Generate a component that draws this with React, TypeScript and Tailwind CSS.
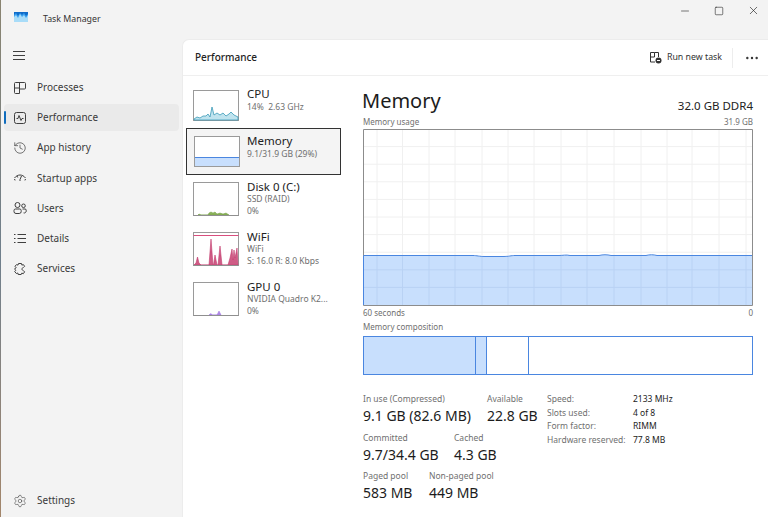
import React from "react";
import { History, Minus, Square, X, Settings, Ellipsis } from "lucide-react";

const navItems = [
  { label: "Processes", icon: "processes" },
  { label: "Performance", icon: "performance", active: true },
  { label: "App history", icon: "history" },
  { label: "Startup apps", icon: "startup" },
  { label: "Users", icon: "users" },
  { label: "Details", icon: "details" },
  { label: "Services", icon: "services" },
];

const NavIcon = ({ name }: { name: string }) => {
  const c = "#3f3f3f";
  if (name === "history") return <History size={14} strokeWidth={1.2} color={c} />;
  return (
    <svg width="14" height="14" viewBox="0 0 14 14" fill="none" stroke={c} strokeWidth="1">
      {name === "details" && <path d="M1 3.500H2.500M4.500 3.500H13M1 7.500H2.500M4.500 7.500H13M1 11.500H2.500M4.500 11.500H13" />}
      {name === "processes" && (
        <path d="M2.500 1.500h9a1 1 0 0 1 1 1V7a1 1 0 0 1-1 1H6.500v4.500h-4a1 1 0 0 1-1-1v-9a1 1 0 0 1 1-1ZM6.500 1.500V8M1.500 7h5" />
      )}
      {name === "performance" && (
        <>
          <rect x="1.500" y="1.500" width="11" height="11" rx="2" />
          <path d="M3.500 7.500h1.500l1-3 2 5 1-2h1.500" />
        </>
      )}
      {name === "startup" && (
        <path d="M1 8.500 2.500 9M13 8.500 11.500 9M1.500 7C3 5 5 4 7 4s4 1 5.500 3M7 8.500 8.500 5M7 8.500v1.500M4 5l.8 1.500" />
      )}
      {name === "users" && (
        <>
          <circle cx="4.500" cy="4" r="2.500" />
          <circle cx="10.500" cy="4.800" r="1.800" />
          <path d="M2.500 8h4.200a1.500 1.500 0 0 1 1.500 1.500v1a2 2 0 0 1-2 2H3a2 2 0 0 1-2-2v-1A1.500 1.500 0 0 1 2.500 8ZM9.500 8H12a1.200 1.200 0 0 1 1.200 1.200v.8a2 2 0 0 1-2.600 1.900" />
        </>
      )}
      {name === "services" && (
        <path d="M5.500 1.500h3l.4 1.600 1.500-.5 1.200 1.700-1.200 1.200c-1 .3-1.500 1-1.500 1.600s.7 1.300 1.500 1.500l1.200 1.300-1.300 1.800-1.500-.6-.6 1.400h-3l-.4-1.500-1.500.5-1.600-2 1.200-1.200L1.500 7l1.700-1.300L2 4.300l1.500-1.700 1.500.5Z" />
      )}
    </svg>
  );
};

const Thumb = ({ children }: { children?: React.ReactNode }) => (
  <svg width="46" height="34" viewBox="0 0 46 34" className="shrink-0">
    <rect x="0.500" y="0.500" width="45" height="33" fill="#fff" stroke="#9a9a9a" />
    {children}
    <path d="M0.500 33.500H45.500" stroke="#8f8f8f" />
  </svg>
);

const devices = [
  {
    name: "Disk 0 (C:)",
    sub: ["SSD (RAID)", "0%"],
    chart: <path d="M5 33 6 32 8 33H15L16 31 18 30 20 31 22 30 24 32 27 31 30 32 33 31 36 33Z" fill="#8bb35a" stroke="#6f9a3e" strokeWidth=".5" />,
  },
  {
    name: "WiFi",
    sub: ["WiFi", "S: 16.0 R: 8.0 Kbps"],
    chart: (
      <>
        <path d="M.500 3.500H45.500" stroke="#d94f7e" />
        <path d="M1 33 3 31 4.500 25 6 31 8 33H16L18 7 20 33H20.500L22 23 24 33H25L27 14 29 33H35L37 26 39 17 40 28 41 18 42 26 44 16 45 33Z" fill="#cf5c86" stroke="#c23a6d" strokeWidth=".6" />
      </>
    ),
  },
  {
    name: "GPU 0",
    sub: ["NVIDIA Quadro K2...", "0%"],
    chart: <path d="M16 33 18 31.500 19 33H24L26 29 28 33Z" fill="#b28be8" stroke="#9a6fe0" strokeWidth=".5" />,
  },
];

const gridX = [14, 39.5, 66, 92, 119, 145, 171, 198, 224, 251, 278, 304, 329, 356, 383];
const gridY = [17.6, 35.2, 52.8, 70.4, 88, 105.6, 123.2, 140.8, 158.4];
const memLine =
  "M0 126.500H110C114 126.500 116 127.500 122 127.500H140C146 127.500 148 126.500 152 126.500H196C200 126.500 203 125.500 207 126.500H236C240 125.500 244 125.500 248 126.500H283C287 125.500 290 125.500 294 126.500H389";

const MemoryGraph = () => (
  <svg width="390" height="177" viewBox="0 0 390 177" className="block">
    <rect x="0.500" y="0.500" width="389" height="176" fill="#fff" />
    <path d={`${memLine}V176H0Z`} fill="#c8dffd" />
    {gridX.map((x) => (
      <React.Fragment key={x}>
        <path d={`M${x} 1V126`} stroke="#f0f0f0" />
        <path d={`M${x} 127V176`} stroke="#b9d2f4" />
      </React.Fragment>
    ))}
    {gridY.map((y) => (
      <path key={y} d={`M1 ${y}H389`} stroke={y > 126 ? "#b9d2f4" : "#f0f0f0"} />
    ))}
    <path d={memLine} fill="none" stroke="#4a86e0" />
    <path d="M.500 126V176.500H389.500V.500H.500V126" fill="none" stroke="#8c8c8c" />
    <path d="M.500 126.500V176" stroke="#4a86e0" />
  </svg>
);

const Stat = ({ label, value, w }: { label: string; value: string; w?: string }) => (
  <div className={w}>
    <div className="text-[8.500px] leading-[12px] text-[#6f6f6f]">{label}</div>
    <div className="mt-[1px] text-[14px] leading-[19px] text-[#1c1c1c] whitespace-nowrap">{value}</div>
  </div>
);

const App: React.FC = () => {
  return (
    <div className="flex h-[517px] w-[768px] overflow-hidden bg-[#f3f3f3] text-[#1c1c1c] font-['Noto_Sans',sans-serif]">
      <div className="w-[1px] shrink-0 bg-gradient-to-b from-[#8a8470] via-[#6f7f8c] to-[#a3866a]" />
      <div className="flex min-w-0 flex-1 flex-col">
        {/* title bar */}
        <div className="flex h-[39px] shrink-0 items-center">
          <svg width="14" height="10" viewBox="0 0 14 10" className="ml-[13px] mb-[5px]">
            <rect width="14" height="10" fill="#3aa0ef" />
            <path d="M0 5 2 3 4 6 6 2 8 5 10 3 12 6 14 3V10H0Z" fill="#a8dcf8" />
            <path d="M0 0H14V2L12 4 10 1 8 3 6 1 4 4 2 1 0 3Z" fill="#0f6cc9" />
          </svg>
          <span className="ml-[15px] mt-[1px] text-[8.800px] text-[#333]">Task Manager</span>
          <div className="ml-auto mr-[-2px] flex items-center self-start pt-[4px] text-[#222]">
            <div className="flex w-[34px] justify-center"><Minus size={12} strokeWidth={1.2} /></div>
            <div className="flex w-[34px] justify-center"><Square size={10} strokeWidth={1.4} /></div>
            <div className="flex w-[34px] justify-center"><X size={13} strokeWidth={1.2} /></div>
          </div>
        </div>
        <div className="flex min-h-0 flex-1">
          {/* nav */}
          <div className="flex w-[181px] shrink-0 flex-col">
            <div className="ml-[12px] mt-[10px] h-[14px]">
              <svg width="13" height="14" viewBox="0 0 13 14" fill="none" stroke="#3f3f3f">
                <path d="M0 2.500H12M0 6.500H12M0 10.500H12" />
              </svg>
            </div>
            <div className="mt-[11px] flex flex-col gap-[3.200px] px-[3px]">
              {navItems.map((item) => (
                <div
                  key={item.label}
                  className={`relative flex h-[27px] items-center rounded-[4px] pl-[9px] ${item.active ? "bg-[#eaeaea]" : ""}`}
                >
                  {item.active && <div className="absolute left-0 top-[7px] h-[13px] w-[2px] rounded bg-[#0f6cbd]" />}
                  <NavIcon name={item.icon} />
                  <span className="ml-[10px] text-[10px] text-[#3a3a3a]">{item.label}</span>
                </div>
              ))}
            </div>
            <div className="mb-[9px] ml-[12px] mt-auto flex items-center">
              <Settings size={14} strokeWidth={1} color="#3f3f3f" />
              <span className="ml-[10px] text-[10px] text-[#3a3a3a]">Settings</span>
            </div>
          </div>
          {/* main panel */}
          <div className="flex min-w-0 flex-1 flex-col rounded-tl-[7px] border-l border-t border-[#ececec] bg-white">
            <div className="flex h-[36px] shrink-0 items-center border-b border-[#efefef] pl-[12px]">
              <span className="text-[10px] font-medium text-[#222]">Performance</span>
              <div className="ml-auto mr-[8px] flex items-center">
                <svg width="13" height="13" viewBox="0 0 13 13" fill="none" stroke="#333" strokeWidth="1">
                  <path d="M1.500 6V1.500H5.500V6ZM1.500 6V11H6M5.500 1.500H9.500V6" />
                  <circle cx="9.500" cy="9.500" r="3" fill="#333" stroke="none" />
                  <path d="M8 9.500H11" stroke="#fff" />
                </svg>
                <span className="ml-[5px] text-[8.800px] text-[#333]">Run new task</span>
                <div className="ml-[10px] h-[20px] w-px bg-[#ededed]" />
                <div className="ml-[11px] flex w-[16px] justify-center"><Ellipsis size={16} strokeWidth={1.6} color="#333" /></div>
              </div>
            </div>
            <div className="flex min-h-0 flex-1">
              {/* device list */}
              <div className="flex w-[180px] shrink-0 flex-col pl-[3px] pt-[14px]">
                <div className="flex items-start pl-[7px]">
                  <svg width="46" height="31" viewBox="0 0 46 31" className="shrink-0">
                    <rect x="0.500" y="0.500" width="45" height="30" fill="#fff" stroke="#9a9a9a" />
                    <path d="M1 29 4 27 7 28 10 26 13 26 15 24 17 27 19 17 21 25 24 23 27 25 30 23 33 26 36 24 38 22 41 25 45 27V30H1Z" fill="#bfe3ee" stroke="#3b9ab8" strokeWidth=".8" />
                  </svg>
                  <div className="ml-[8px] mt-[-2px]">
                    <div className="text-[11.500px] leading-[12px] text-[#222]">CPU</div>
                    <div className="text-[8.500px] leading-[14px] text-[#6f6f6f]">14%&nbsp; 2.63 GHz</div>
                  </div>
                </div>
                <div className="mt-[7px] flex h-[47px] w-[155px] items-start border border-[#333] bg-[#f4f4f4] pl-[7px] pt-[7px]">
                  <svg width="46" height="31" viewBox="0 0 46 31" className="shrink-0">
                    <rect x="0.500" y="0.500" width="45" height="30" fill="#fff" stroke="#9a9a9a" />
                    <rect x="1" y="21" width="44" height="9" fill="#c8dffd" />
                    <path d="M1 21.500H45" stroke="#4a86e0" />
                  </svg>
                  <div className="ml-[7px] mt-[-1px]">
                    <div className="text-[11.500px] leading-[12px] text-[#222]">Memory</div>
                    <div className="text-[8.500px] leading-[14px] text-[#6f6f6f]">9.1/31.9 GB (29%)</div>
                  </div>
                </div>
                <div className="mt-[7px] flex flex-col gap-[16px]">
                  {devices.map((d) => (
                    <div key={d.name} className="flex h-[34px] items-start pl-[7px]">
                      <Thumb>{d.chart}</Thumb>
                      <div className="ml-[8px] mt-[-1px]">
                        <div className="text-[11.500px] leading-[12px] text-[#222]">{d.name}</div>
                        {d.sub.map((s) => (
                          <div key={s} className="text-[8.500px] leading-[12px] text-[#6f6f6f]">{s}</div>
                        ))}
                      </div>
                    </div>
                  ))}
                </div>
              </div>
              {/* detail */}
              <div className="min-w-0 flex-1">
                <div className="flex h-[38px] w-[390px] items-end justify-between">
                  <span className="ml-[-1px] text-[20px] leading-[26px] text-[#1c1c1c]">Memory</span>
                  <span className="text-[11.500px] leading-[16px] text-[#222]">32.0 GB DDR4</span>
                </div>
                <div className="flex h-[15px] w-[390px] items-center justify-between text-[8px] text-[#6f6f6f]">
                  <span>Memory usage</span>
                  <span>31.9 GB</span>
                </div>
                <MemoryGraph />
                <div className="flex h-[14px] w-[390px] items-center justify-between text-[8px] text-[#6f6f6f]">
                  <span>60 seconds</span>
                  <span>0</span>
                </div>
                <div className="flex h-[14px] items-center text-[8px] text-[#6f6f6f]">Memory composition</div>
                <div className="mt-[2px] flex h-[39px] w-[390px] border border-[#4a86e0]">
                  <div className="w-[112px] border-r border-[#4a86e0] bg-[#c8dffd]" />
                  <div className="w-[11px] border-r border-[#4a86e0] bg-[#c8dffd]" />
                  <div className="w-[42px] border-r border-[#4a86e0]" />
                  <div className="flex-1" />
                </div>
                <div className="mt-[18px] flex w-[320px]">
                  <div className="flex w-[184px] shrink-0 flex-col gap-[6.500px]">
                    <div className="flex">
                      <Stat label="In use (Compressed)" value="9.1 GB (82.6 MB)" w="w-[124px]" />
                      <Stat label="Available" value="22.8 GB" />
                    </div>
                    <div className="flex">
                      <Stat label="Committed" value="9.7/34.4 GB" w="w-[91px]" />
                      <Stat label="Cached" value="4.3 GB" />
                    </div>
                    <div className="flex">
                      <Stat label="Paged pool" value="583 MB" w="w-[66px]" />
                      <Stat label="Non-paged pool" value="449 MB" />
                    </div>
                  </div>
                  <div className="grid grid-cols-[86px_auto] auto-rows-[13.500px] items-center text-[8.500px] whitespace-nowrap">
                    <span className="text-[#6f6f6f]">Speed:</span><span>2133 MHz</span>
                    <span className="text-[#6f6f6f]">Slots used:</span><span>4 of 8</span>
                    <span className="text-[#6f6f6f]">Form factor:</span><span>RIMM</span>
                    <span className="text-[#6f6f6f]">Hardware reserved:</span><span>77.8 MB</span>
                  </div>
                </div>
              </div>
            </div>
          </div>
        </div>
      </div>
    </div>
  );
};

export default App;
